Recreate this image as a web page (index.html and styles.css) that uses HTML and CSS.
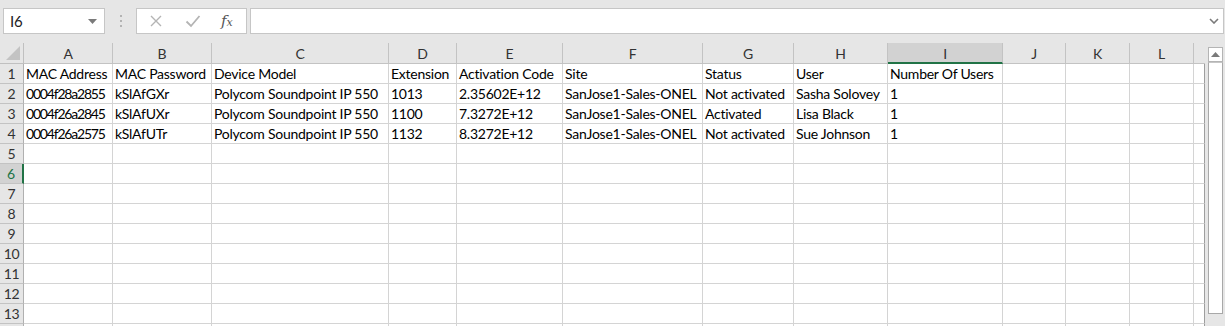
FILE: index.html
```html
<!DOCTYPE html>
<html>
<head>
<meta charset="utf-8">
<link rel="stylesheet" href="styles.css">
</head>
<body>
<div class="app">
  <div class="toolbar">
    <div class="namebox"><span class="ref">I6</span><svg class="caret" width="9" height="5" viewBox="0 0 9 5"><path d="M0 0H9L4.5 5Z" fill="#7a7a7a"/></svg></div>
    <div class="dots"><i></i><i></i><i></i></div>
    <div class="fxbox">
      <svg class="ico" width="14" height="14" viewBox="0 0 14 14"><path d="M2 2L12 12M12 2L2 12" stroke="#b4b4b4" stroke-width="1.4" fill="none"/></svg>
      <svg class="ico" width="16" height="14" viewBox="0 0 16 14"><path d="M1.5 7.5L6 12L14.5 2" stroke="#b4b4b4" stroke-width="1.8" fill="none"/></svg>
      <span class="fx">f<span class="x">x</span></span>
    </div>
    <div class="formula"><svg class="chev" width="10" height="6" viewBox="0 0 10 6"><path d="M1 1L5 5L9 1" stroke="#7a7a7a" stroke-width="1.6" fill="none"/></svg></div>
  </div>
  <div class="sheet">
    <div class="grid">
      <div class="corner"><svg width="14" height="14" viewBox="0 0 14 14"><path d="M14 0V14H0Z" fill="#c3c3c3"/></svg></div>
      <div class="ch">A</div><div class="ch">B</div><div class="ch">C</div><div class="ch">D</div><div class="ch">E</div><div class="ch">F</div><div class="ch">G</div><div class="ch">H</div><div class="ch sel">I</div><div class="ch">J</div><div class="ch">K</div><div class="ch">L</div><div class="ch end"></div>

      <div class="rh">1</div><div class="c">MAC Address</div><div class="c">MAC Password</div><div class="c">Device Model</div><div class="c">Extension</div><div class="c">Activation Code</div><div class="c">Site</div><div class="c">Status</div><div class="c">User</div><div class="c">Number Of Users</div><div class="c"></div><div class="c"></div><div class="c"></div><div class="c end"></div>

      <div class="rh">2</div><div class="c mac">0004f28a2855</div><div class="c">kSlAfGXr</div><div class="c">Polycom Soundpoint IP 550</div><div class="c">1013</div><div class="c">2.35602E+12</div><div class="c">SanJose1-Sales-ONEL</div><div class="c">Not activated</div><div class="c">Sasha Solovey</div><div class="c">1</div><div class="c"></div><div class="c"></div><div class="c"></div><div class="c end"></div>

      <div class="rh">3</div><div class="c mac">0004f26a2845</div><div class="c">kSlAfUXr</div><div class="c">Polycom Soundpoint IP 550</div><div class="c">1100</div><div class="c">7.3272E+12</div><div class="c">SanJose1-Sales-ONEL</div><div class="c">Activated</div><div class="c">Lisa Black</div><div class="c">1</div><div class="c"></div><div class="c"></div><div class="c"></div><div class="c end"></div>

      <div class="rh">4</div><div class="c mac">0004f26a2575</div><div class="c">kSlAfUTr</div><div class="c">Polycom Soundpoint IP 550</div><div class="c">1132</div><div class="c">8.3272E+12</div><div class="c">SanJose1-Sales-ONEL</div><div class="c">Not activated</div><div class="c">Sue Johnson</div><div class="c">1</div><div class="c"></div><div class="c"></div><div class="c"></div><div class="c end"></div>

      <div class="rh">5</div><div class="c"></div><div class="c"></div><div class="c"></div><div class="c"></div><div class="c"></div><div class="c"></div><div class="c"></div><div class="c"></div><div class="c"></div><div class="c"></div><div class="c"></div><div class="c"></div><div class="c end"></div>

      <div class="rh sel">6</div><div class="c"></div><div class="c"></div><div class="c"></div><div class="c"></div><div class="c"></div><div class="c"></div><div class="c"></div><div class="c"></div><div class="c"></div><div class="c"></div><div class="c"></div><div class="c"></div><div class="c end"></div>

      <div class="rh">7</div><div class="c"></div><div class="c"></div><div class="c"></div><div class="c"></div><div class="c"></div><div class="c"></div><div class="c"></div><div class="c"></div><div class="c"></div><div class="c"></div><div class="c"></div><div class="c"></div><div class="c end"></div>

      <div class="rh">8</div><div class="c"></div><div class="c"></div><div class="c"></div><div class="c"></div><div class="c"></div><div class="c"></div><div class="c"></div><div class="c"></div><div class="c"></div><div class="c"></div><div class="c"></div><div class="c"></div><div class="c end"></div>

      <div class="rh">9</div><div class="c"></div><div class="c"></div><div class="c"></div><div class="c"></div><div class="c"></div><div class="c"></div><div class="c"></div><div class="c"></div><div class="c"></div><div class="c"></div><div class="c"></div><div class="c"></div><div class="c end"></div>

      <div class="rh">10</div><div class="c"></div><div class="c"></div><div class="c"></div><div class="c"></div><div class="c"></div><div class="c"></div><div class="c"></div><div class="c"></div><div class="c"></div><div class="c"></div><div class="c"></div><div class="c"></div><div class="c end"></div>

      <div class="rh">11</div><div class="c"></div><div class="c"></div><div class="c"></div><div class="c"></div><div class="c"></div><div class="c"></div><div class="c"></div><div class="c"></div><div class="c"></div><div class="c"></div><div class="c"></div><div class="c"></div><div class="c end"></div>

      <div class="rh">12</div><div class="c"></div><div class="c"></div><div class="c"></div><div class="c"></div><div class="c"></div><div class="c"></div><div class="c"></div><div class="c"></div><div class="c"></div><div class="c"></div><div class="c"></div><div class="c"></div><div class="c end"></div>

      <div class="rh">13</div><div class="c"></div><div class="c"></div><div class="c"></div><div class="c"></div><div class="c"></div><div class="c"></div><div class="c"></div><div class="c"></div><div class="c"></div><div class="c"></div><div class="c"></div><div class="c"></div><div class="c end"></div>

      <div class="rh"></div><div class="c"></div><div class="c"></div><div class="c"></div><div class="c"></div><div class="c"></div><div class="c"></div><div class="c"></div><div class="c"></div><div class="c"></div><div class="c"></div><div class="c"></div><div class="c"></div><div class="c end"></div>
    </div>
    <div class="vscroll">
      <div class="upbtn"><svg width="9" height="5" viewBox="0 0 9 5"><path d="M0 5H9L4.5 0Z" fill="#7a7a7a"/></svg></div>
      <div class="thumb"></div>
    </div>
  </div>
</div>
</body>
</html>
```
FILE: styles.css
```css
html, body {
  margin: 0;
  padding: 0;
  background: #e6e6e6;
  overflow: hidden;
}
.app {
  width: 1225px;
  height: 326px;
  overflow: hidden;
  font-family: Lato, "Liberation Sans", sans-serif;
  font-size: 14px;
  letter-spacing: -0.25px;
  color: #000;
}
.toolbar {
  height: 43px;
  box-sizing: border-box;
  padding-top: 8px;
  display: flex;
  align-items: flex-start;
  background: #e6e6e6;
}
.namebox {
  margin-left: 3px;
  width: 102px;
  height: 26px;
  box-sizing: border-box;
  border: 1px solid #c6c6c6;
  background: #fff;
  display: flex;
  align-items: center;
  justify-content: space-between;
  padding: 0 7px 0 6px;
}
.namebox .ref {
  font-size: 15px;
  color: #222;
}
.dots {
  width: 31px;
  height: 26px;
  display: flex;
  flex-direction: column;
  align-items: center;
  justify-content: center;
  gap: 3px;
}
.dots i {
  display: block;
  width: 2px;
  height: 2px;
  background: #b3b3b3;
}
.fxbox {
  width: 111px;
  height: 26px;
  box-sizing: border-box;
  border: 1px solid #c6c6c6;
  background: #fff;
  display: flex;
  align-items: center;
  padding-left: 12px;
  gap: 22px;
}
.fx {
  font-family: "DejaVu Serif", "Liberation Serif", serif;
  font-style: italic;
  font-size: 15px;
  color: #555;
  margin-left: -2px;
  letter-spacing: 0;
}
.fx .x {
  font-size: 11px;
}
.formula {
  margin-left: 3px;
  width: 974px;
  height: 26px;
  box-sizing: border-box;
  border: 1px solid #c6c6c6;
  background: #fff;
  display: flex;
  align-items: center;
  justify-content: flex-end;
  padding-right: 4px;
}
.sheet {
  display: flex;
  height: 283px;
}
.grid {
  display: grid;
  grid-template-columns: 24px 89px 99px 177px 68px 106px 140px 91px 94px 115px 63px 64px 64px 11px;
  grid-template-rows: 21px;
  grid-auto-rows: 20px;
  width: 1205px;
  background: #fff;
}
.grid > div {
  box-sizing: border-box;
  white-space: nowrap;
  overflow: hidden;
}
.corner {
  background: #e6e6e6;
  border-right: 1px solid #c0c0c0;
  border-bottom: 1px solid #c0c0c0;
  display: flex;
  align-items: flex-end;
  justify-content: flex-end;
  padding: 0 3px 3px 0;
}
.corner svg {
  display: block;
}
.ch {
  background: #e6e6e6;
  border-right: 1px solid #c3c3c3;
  border-bottom: 1px solid #c3c3c3;
  text-align: center;
  line-height: 20px;
  color: #333;
  padding-top: 1px;
}
.ch.sel {
  background: #d2d2d2;
  border-bottom: 2px solid #217346;
}
.ch.end {
  border-right: none;
}
.rh {
  background: #e6e6e6;
  border-right: 1px solid #b0b0b0;
  border-bottom: 1px solid #c3c3c3;
  text-align: center;
  line-height: 20px;
  color: #333;
}
.rh.sel {
  background: #d2d2d2;
  border-right: 2px solid #217346;
  color: #217346;
}
.c {
  border-right: 1px solid #d4d4d4;
  border-bottom: 1px solid #d4d4d4;
  padding-left: 2px;
  line-height: 20px;
}
.c.mac {
  letter-spacing: -1.2px;
}
.c.end {
  border-right: 1px solid #9e9e9e;
}
.vscroll {
  width: 20px;
  background: #e6e6e6;
  padding-left: 3px;
  box-sizing: border-box;
  display: flex;
  flex-direction: column;
}
.upbtn {
  margin-top: 4px;
  width: 15px;
  height: 15px;
  box-sizing: border-box;
  border: 1px solid #b4b4b4;
  background: #fff;
  display: flex;
  align-items: center;
  justify-content: center;
}
.thumb {
  width: 15px;
  height: 252px;
  box-sizing: border-box;
  border: 1px solid #a8a8a8;
  border-top-color: #c6c6c6;
  background: #fff;
}
```
